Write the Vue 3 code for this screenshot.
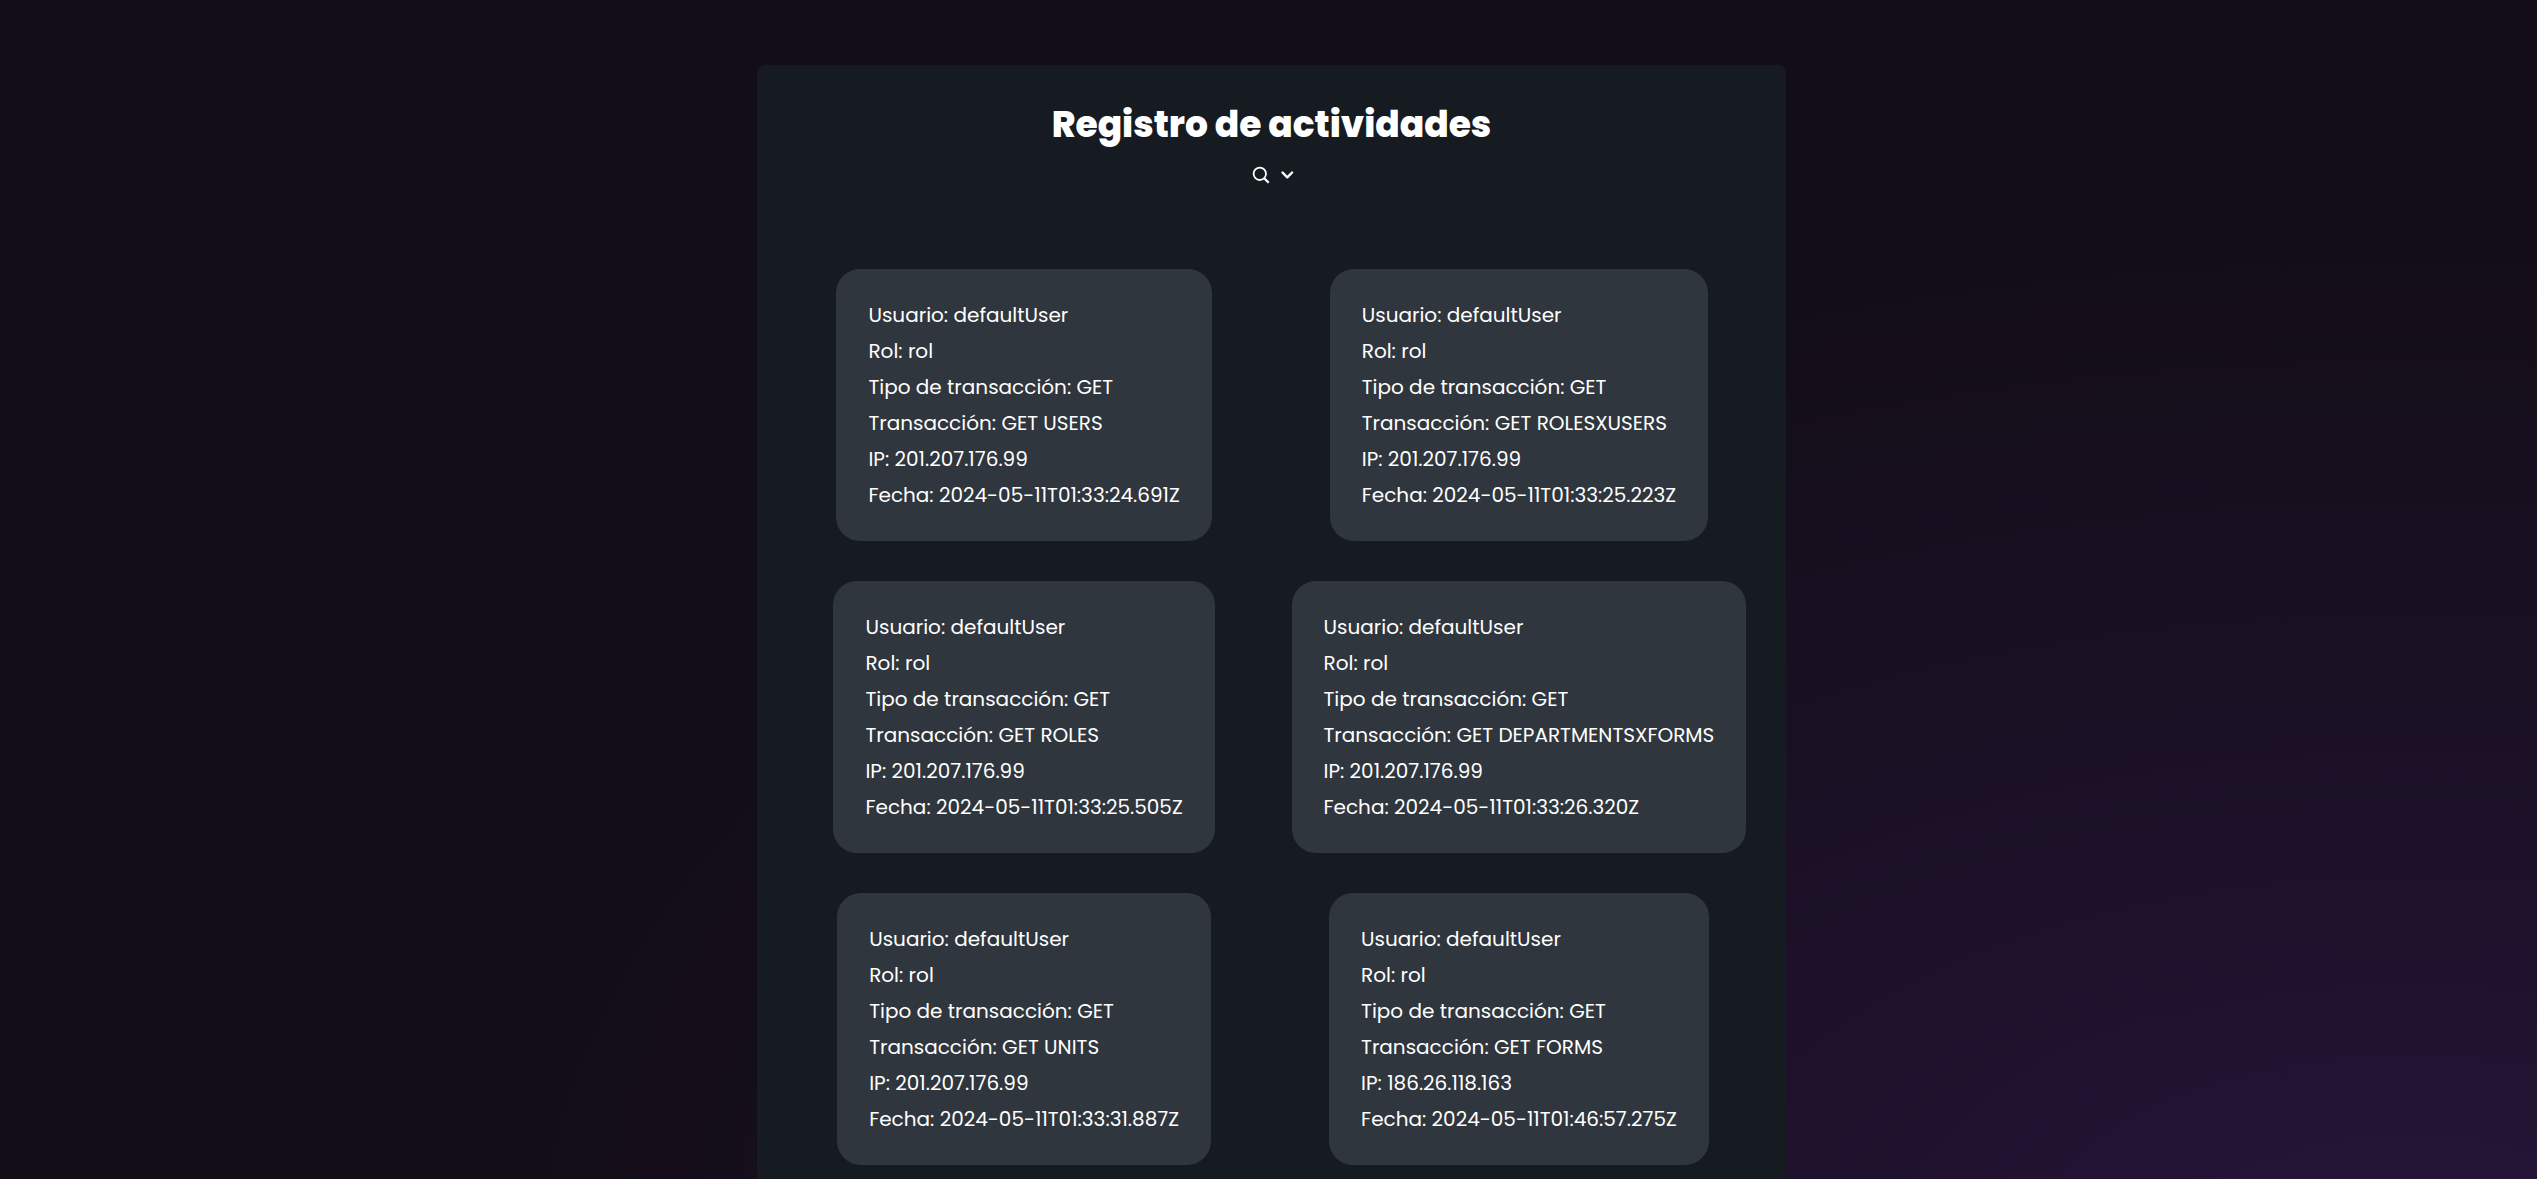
<script setup>
const activities = [
  { id: 1, user: 'defaultUser', role: 'rol', type: 'GET', action: 'GET USERS', ip: '201.207.176.99', date: '2024-05-11T01:33:24.691Z' },
  { id: 2, user: 'defaultUser', role: 'rol', type: 'GET', action: 'GET ROLESXUSERS', ip: '201.207.176.99', date: '2024-05-11T01:33:25.223Z' },
  { id: 3, user: 'defaultUser', role: 'rol', type: 'GET', action: 'GET ROLES', ip: '201.207.176.99', date: '2024-05-11T01:33:25.505Z' },
  { id: 4, user: 'defaultUser', role: 'rol', type: 'GET', action: 'GET DEPARTMENTSXFORMS', ip: '201.207.176.99', date: '2024-05-11T01:33:26.320Z' },
  { id: 5, user: 'defaultUser', role: 'rol', type: 'GET', action: 'GET UNITS', ip: '201.207.176.99', date: '2024-05-11T01:33:31.887Z' },
  { id: 6, user: 'defaultUser', role: 'rol', type: 'GET', action: 'GET FORMS', ip: '186.26.118.163', date: '2024-05-11T01:46:57.275Z' },
]
</script>

<template>
  <div class="page">
    <main class="panel">
      <header class="head">
        <h1>Registro de actividades</h1>
        <button class="filter" type="button" aria-label="Buscar">
          <svg width="20" height="20" viewBox="0 0 20 20" fill="none" stroke="currentColor" aria-hidden="true">
            <circle cx="9.8" cy="8.8" r="6.2" stroke-width="1.8" />
            <path d="M14.2 13.2l4.5 4.5" stroke-width="2.3" />
          </svg>
          <svg width="16" height="16" viewBox="0 0 16 16" fill="none" stroke="currentColor" stroke-width="2.4" stroke-linecap="round" stroke-linejoin="round" aria-hidden="true">
            <path d="M4.5 5.5l4.8 4.8 4.8-4.8" />
          </svg>
        </button>
      </header>
      <section class="grid">
        <article v-for="item in activities" :key="item.id" class="card">
          <p>Usuario: {{ item.user }}</p>
          <p>Rol: {{ item.role }}</p>
          <p>Tipo de transacción: {{ item.type }}</p>
          <p>Transacción: {{ item.action }}</p>
          <p>IP: {{ item.ip }}</p>
          <p>Fecha: {{ item.date }}</p>
        </article>
      </section>
    </main>
  </div>
</template>

<style>
body {
  margin: 0;
  background: #130d17;
}
</style>

<style scoped>
.page {
  box-sizing: border-box;
  display: flex;
  justify-content: center;
  align-items: flex-start;
  min-height: 100vh;
  padding: 65px 0 0 6px;
  background: radial-gradient(ellipse 75% 85% at 95% 105%, #261439 0%, #1c1128 45%, #130d17 100%);
  color: #fff;
  font-family: Poppins, "Open Sans", sans-serif;
  font-size: 20px;
}

.panel {
  border-radius: 8px;
  background: #161b22;
}

.head {
  display: flex;
  flex-direction: column;
  align-items: center;
  padding-top: 32px;
}

h1 {
  margin: 0;
  font-size: 36px;
  font-weight: 800;
  line-height: 56px;
}

.filter {
  display: flex;
  align-items: center;
  gap: 8px;
  height: 44px;
  padding: 0;
  border: 0;
  background: none;
  color: inherit;
  cursor: pointer;
}

.grid {
  display: grid;
  grid-template-columns: 1fr 1fr;
  justify-items: center;
  gap: 40px;
  padding: 72px 40px 40px;
}

.card {
  padding: 28px 32px;
  border-radius: 24px;
  background: #30363d;
}

.card p {
  margin: 0;
  line-height: 36px;
  white-space: nowrap;
}
</style>
